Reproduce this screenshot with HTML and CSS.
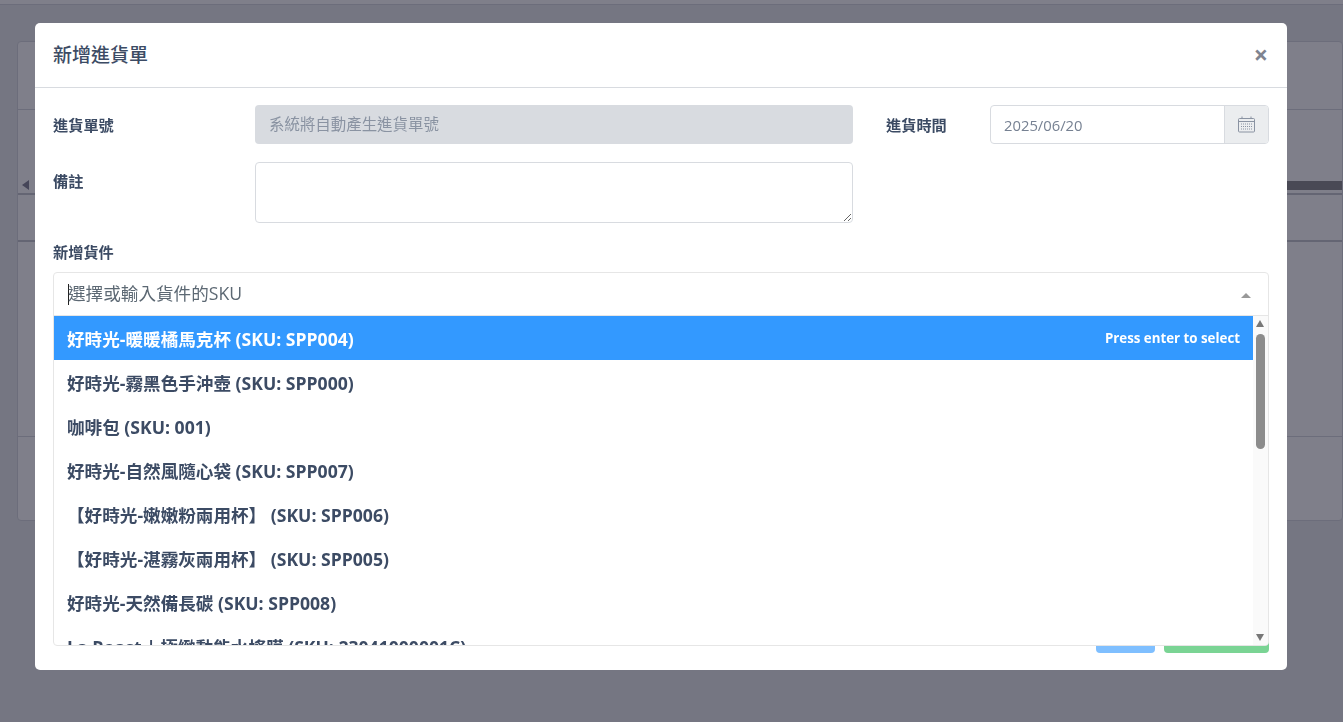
FILE: index.html
```html
<!DOCTYPE html>
<html lang="zh-Hant">
<head>
<meta charset="utf-8">
<title>新增進貨單</title>
<link rel="stylesheet" href="styles.css">
</head>
<body>
<div class="page">
  <div class="topbar"></div>
  <div class="card">
    <div class="card-row r1"></div>
    <div class="card-row r2"><span class="arrow"></span><span class="track"></span></div>
    <div class="card-row r3"></div>
    <div class="card-row r4"></div>
    <div class="card-row r5"></div>
  </div>
</div>
<div class="backdrop"></div>
<div class="modal">
  <header class="modal-header">
    <h5 class="modal-title">新增進貨單</h5>
    <span class="close">×</span>
  </header>
  <div class="modal-body">
    <div class="row row-top">
      <label class="label col-a">進貨單號</label>
      <div class="input disabled col-b">系統將自動產生進貨單號</div>
      <label class="label col-c">進貨時間</label>
      <div class="date col-d">
        <div class="date-value">2025/06/20</div>
        <div class="date-addon">
          <svg width="17" height="17" viewBox="0 0 17 17" fill="none" stroke="#8a93a2">
            <rect x="0.5" y="2.5" width="16" height="13.5" rx="1"/>
            <path d="M0.5 5.5H16.5M4 0.5V3M13 0.5V3"/>
            <path stroke-dasharray="1 1" d="M3 8H14M3 10.5H14M3 13H14"/>
          </svg>
        </div>
      </div>
    </div>
    <div class="row row-note">
      <label class="label col-a">備註</label>
      <textarea class="textarea col-b"></textarea>
    </div>
    <div class="label add-label">新增貨件</div>
    <div class="select">
      <div class="select-control">
        <span class="caret"></span><span class="select-placeholder">選擇或輸入貨件的SKU</span>
        <span class="select-arrow"></span>
      </div>
      <div class="select-menu">
        <ul class="options">
          <li class="option active"><span>好時光-暖暖橘馬克杯 (SKU: SPP004)</span><small>Press enter to select</small></li>
          <li class="option">好時光-霧黑色手沖壺 (SKU: SPP000)</li>
          <li class="option">咖啡包 (SKU: 001)</li>
          <li class="option">好時光-自然風隨心袋 (SKU: SPP007)</li>
          <li class="option">【好時光-嫩嫩粉兩用杯】 (SKU: SPP006)</li>
          <li class="option">【好時光-湛霧灰兩用杯】 (SKU: SPP005)</li>
          <li class="option">好時光-天然備長碳 (SKU: SPP008)</li>
          <li class="option">La Roast | 極緻動能水搖膜 (SKU: 23041000001C)</li>
        </ul>
        <div class="scrollbar">
          <span class="sb-up"></span>
          <span class="sb-thumb"></span>
          <span class="sb-down"></span>
        </div>
      </div>
    </div>
    <div class="actions">
      <span class="btn btn-blue"></span>
      <span class="btn btn-green"></span>
    </div>
  </div>
</div>
</body>
</html>
```
FILE: styles.css
```css
* { box-sizing: border-box; }
html, body { margin: 0; height: 100%; overflow: hidden; }
body {
  background: #ebedef;
  font-family: "Open Sans", "Noto Sans CJK TC", sans-serif;
  color: #3c4b64;
  font-size: 15.2px;
}
.page { height: 722px; overflow: hidden; }
.topbar { height: 5px; background: #fff; border-bottom: 1px solid #d8dbe0; }
.card {
  margin: 36px 0 0 17px;
  height: 480px;
  background: #fff;
  border: 1px solid #d8dbe0;
  border-radius: 4px;
  display: flex;
  flex-direction: column;
}
.card-row { border-bottom: 1px solid #d8dbe0; position: relative; }
.r1 { height: 68px; }
.r2 { height: 85px; border-bottom: 2px solid #c8cbd0; }
.r3 { height: 47px; border-bottom: 2px solid #c8cbd0; }
.r4 { height: 195px; }
.r5 { border-bottom: 0; flex: 1; }
.arrow {
  position: absolute; left: 4px; bottom: 3px;
  border-top: 5px solid transparent; border-bottom: 5px solid transparent; border-right: 7px solid #8c8c9c;
}
.track { position: absolute; right: 0; bottom: 3px; width: 56px; height: 9px; background: #929295; }
.backdrop { position: fixed; inset: 0; background: rgba(0, 0, 21, .5); }
.modal {
  position: fixed;
  left: 35px; top: 23px;
  width: 1252px; height: 647px;
  background: #fff;
  border-radius: 5px;
  display: flex;
  flex-direction: column;
}
.modal-header {
  height: 65px;
  flex: none;
  border-bottom: 1px solid #d8dbe0;
  display: flex;
  align-items: center;
  justify-content: space-between;
  padding: 0 19px 0 18px;
}
.modal-title { margin: 0; font-size: 19px; font-weight: 500; line-height: 1; color: #3c4b64; }
.close { font-size: 25px; font-weight: 700; line-height: 1; color: #7f8490; margin-top: -2px; }
.modal-body { padding: 17px 18px 0; position: relative; flex: 1; }
.row { display: grid; grid-template-columns: 202px 598px 33px 104px 279px; }
.row-top { height: 39px; align-items: center; margin-bottom: 18px; }
.row-note { height: 61px; margin-bottom: 19px; }
.label { font-size: 15.2px; font-weight: 700; line-height: 20px; color: #3c4b64; }
.col-a { grid-column: 1; }
.col-b { grid-column: 2; }
.col-c { grid-column: 4; }
.col-d { grid-column: 5; }
.row-note .label { padding-top: 9px; }
.input { height: 39px; border-radius: 4px; padding: 0 14px; line-height: 39px; font-size: 15.45px; }
.disabled { background: #d8dbe0; color: #8a93a2; }
.textarea { height: 61px; border: 1px solid #d8dbe0; border-radius: 4px; resize: vertical; background: #fff; }
.date { display: flex; height: 39px; border: 1px solid #d8dbe0; border-radius: 4px; overflow: hidden; }
.date-value { flex: 1; padding: 0 13px; line-height: 38px; font-size: 14.8px; color: #768192; }
.date-addon { width: 44px; background: #ebedef; border-left: 1px solid #d8dbe0; display: flex; align-items: center; justify-content: center; }
.add-label { margin-bottom: 10px; }
.select { position: absolute; left: 18px; right: 18px; top: 184px; height: 374px; border: 1px solid #e6e6e6; border-radius: 4px; background: #fff; z-index: 1; display: flex; flex-direction: column; overflow: hidden; }
.select-control { height: 43px; flex: none; display: flex; align-items: center; padding-left: 14px; position: relative; border-bottom: 1px solid #e6e6e6; }
.caret { width: 1px; height: 21px; background: #222; margin-right: -1px; }
.select-placeholder { font-size: 17.6px; line-height: 24px; color: #5c6873; margin-top: -3px; }
.select-arrow { position: absolute; right: 17px; top: 20px; border: 5px solid transparent; border-top: 0; border-bottom-color: #999; }
.select-menu { flex: 1; display: flex; min-height: 0; }
.options { list-style: none; margin: 0; padding: 0; flex: 1; overflow: hidden; }
.option { height: 44px; line-height: 24px; padding: 2px 13px 0; font-size: 17.6px; font-weight: 700; color: #3c4b64; white-space: nowrap; display: flex; justify-content: space-between; align-items: center; }
.option.active { background: #39f; color: #fff; }
.option small { font-size: 13.3px; font-weight: 700; line-height: 20px; margin-top: -2px; }
.scrollbar { width: 15px; flex: none; background: #fafafa; position: relative; }
.sb-up, .sb-down { position: absolute; left: 3px; border-style: solid; border-color: transparent; border-width: 0 4.5px; }
.sb-up { top: 4px; border-bottom: 7px solid #777; }
.sb-down { bottom: 4px; border-top: 7px solid #777; }
.sb-thumb { position: absolute; left: 3px; top: 18px; width: 9px; height: 115px; border-radius: 5px; background: #8c8c8c; }
.actions { position: absolute; right: 18px; bottom: 17px; display: flex; gap: 9px; }
.btn { display: block; height: 37px; border-radius: 4px; }
.btn-blue { width: 59px; background: #7fbfff; }
.btn-green { width: 105px; background: #7ad494; }
```
